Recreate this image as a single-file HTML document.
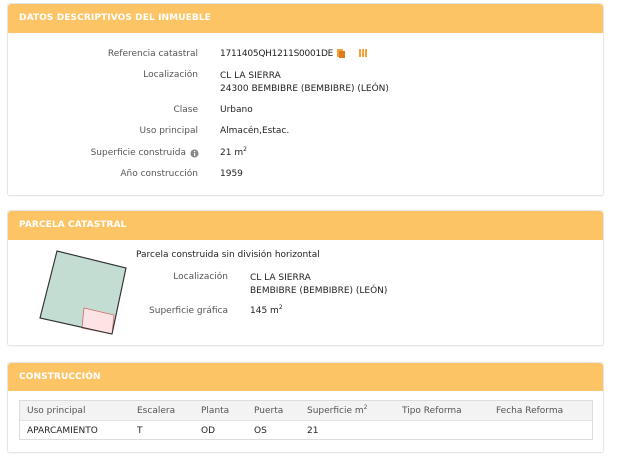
<!DOCTYPE html>
<html><head><meta charset="utf-8"><style>
*{margin:0;padding:0;box-sizing:border-box}
body{width:640px;height:468px;background:#fff;font-family:"DejaVu Sans","Liberation Sans",sans-serif;font-size:9px;color:#222;position:relative;overflow:hidden}
.p{position:absolute;left:7px;width:597px;border:1px solid #e6e6e6;border-radius:3px;background:#fff;box-shadow:0 1px 1px rgba(0,0,0,.04)}
.h{height:29px;background:#fdc466;color:#fff;font-weight:bold;font-size:9px;line-height:29px;padding-left:11px;border-radius:3px 3px 0 0;letter-spacing:.1px}
.a{position:absolute;white-space:nowrap;line-height:11px}
.l{color:#555;text-align:right}
.t{position:absolute;left:19px;top:400px;width:574px;border:1px solid #ddd}
.t div{position:absolute;white-space:nowrap;line-height:11px}
sup{font-size:6px;line-height:0;vertical-align:4px}
.n{letter-spacing:-0.25px}
</style></head><body>
<div class="p" style="top:3px;height:193px"><div class="h">DATOS DESCRIPTIVOS DEL INMUEBLE</div></div>
<div class="a l" style="right:442px;top:49px">Referencia catastral</div>
<div class="a n" style="left:220px;top:49px">1711405QH1211S0001DE</div>
<svg class="a" style="left:336px;top:48px" width="10" height="11"><rect x="1" y="1" width="6" height="8" fill="#f4a13a"/><rect x="3" y="3" width="6" height="7" fill="#e07b1a"/></svg>
<svg class="a" style="left:358px;top:48px" width="10" height="11"><rect x="1" y="1" width="2" height="8" fill="#f4a13a"/><rect x="4" y="1" width="2" height="8" fill="#f4a13a"/><rect x="7" y="1" width="2" height="8" fill="#f4a13a"/></svg>
<div class="a l" style="right:442px;top:70px">Localización</div>
<div class="a" style="left:220px;top:70px;line-height:13px">CL LA SIERRA<br>24300 BEMBIBRE (BEMBIBRE) (LEÓN)</div>
<div class="a l" style="right:442px;top:105px">Clase</div>
<div class="a" style="left:220px;top:105px">Urbano</div>
<div class="a l" style="right:442px;top:126px">Uso principal</div>
<div class="a" style="left:220px;top:126px">Almacén,Estac.</div>
<div class="a l" style="right:454px;top:148px">Superficie construida</div>
<svg class="a" style="left:190px;top:149px" width="9" height="9"><circle cx="4.5" cy="4.5" r="4" fill="#888"/><rect x="4" y="4" width="1.2" height="3" fill="#fff"/><rect x="4" y="2" width="1.2" height="1.2" fill="#fff"/></svg>
<div class="a" style="left:220px;top:148px">21 m<sup>2</sup></div>
<div class="a l" style="right:442px;top:169px">Año construcción</div>
<div class="a" style="left:220px;top:169px">1959</div>

<div class="p" style="top:210px;height:136px"><div class="h">PARCELA CATASTRAL</div></div>
<svg class="a" style="left:38px;top:248px" width="90" height="90"><polygon points="19,3 88,20 74,86 2,70" fill="#c4ddd3" stroke="#333" stroke-width="1"/><polygon points="46,60 76,67 74,86 44,80" fill="#fde3e3" stroke="#d06a6a" stroke-width="0.8"/><polygon points="19,3 88,20 74,86 2,70" fill="none" stroke="#333" stroke-width="1"/></svg>
<div class="a" style="left:136px;top:250px">Parcela construida sin división horizontal</div>
<div class="a l" style="right:412px;top:272px">Localización</div>
<div class="a" style="left:250px;top:272px;line-height:13px">CL LA SIERRA<br>BEMBIBRE (BEMBIBRE) (LEÓN)</div>
<div class="a l" style="right:412px;top:306px">Superficie gráfica</div>
<div class="a" style="left:250px;top:306px">145 m<sup>2</sup></div>

<div class="p" style="top:362px;height:91px"><div class="h" style="height:28px;line-height:28px">CONSTRUCCIÓN</div></div>
<div class="t" style="height:40px">
<div style="left:0;top:0;width:572px;height:20px;background:#f3f3f3;border-bottom:1px solid #e3e3e3"></div>
<div style="left:7px;top:5px;color:#555">Uso principal</div>
<div style="left:117px;top:5px;color:#555">Escalera</div>
<div style="left:181px;top:5px;color:#555">Planta</div>
<div style="left:234px;top:5px;color:#555">Puerta</div>
<div style="left:287px;top:5px;color:#555">Superficie m<sup>2</sup></div>
<div style="left:382px;top:5px;color:#555">Tipo Reforma</div>
<div style="left:476px;top:5px;color:#555">Fecha Reforma</div>
<div style="left:7px;top:25px">APARCAMIENTO</div>
<div style="left:117px;top:25px">T</div>
<div style="left:181px;top:25px">OD</div>
<div style="left:234px;top:25px">OS</div>
<div style="left:287px;top:25px">21</div>
</div>
</body></html>
